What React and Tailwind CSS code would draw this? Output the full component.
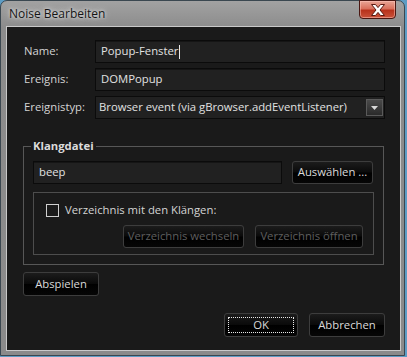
import React from "react";

const btnBase =
  "flex items-center justify-center rounded-[3px] border border-[#3d3d3d] bg-[linear-gradient(180deg,#1c1c1c_0%,#0a0a0a_48%,#000_52%,#060606_100%)] text-[11.3px] leading-none";

function Button({ children, className = "", disabled, focus }) {
  return (
    <div
      className={`${btnBase} ${disabled ? "text-[#5e5e5e]" : "text-[#dadada]"} ${className} relative`}
    >
      {focus && (
        <div className="absolute inset-[3px] border border-dotted border-[#e8e8e8]" />
      )}
      <span className="-mt-px">{children}</span>
    </div>
  );
}

function TextField({ value, caret }) {
  return (
    <div className="flex h-[23px] items-center border border-[#0b0b0b] bg-[#212121] pl-[5px] text-[11.3px] text-[#e2e2e2] shadow-[inset_0_1px_0_#151515]">
      <span>{value}</span>
      {caret && <span className="ml-px h-[14px] w-px bg-[#e8e8e8]" />}
    </div>
  );
}

function Select({ value }) {
  return (
    <div className="flex h-[23px] items-center justify-between border border-[#0b0b0b] bg-[#212121] pl-[3px] pr-px text-[11.3px] text-[#e2e2e2]">
      <span>{value}</span>
      <div className="flex h-[17px] w-[17px] items-center justify-center border border-[#5a5a5a] bg-[linear-gradient(180deg,#4a4a4a,#2a2a2a)]">
        <svg width="7" height="4" viewBox="0 0 7 4">
          <path d="M0 0h7L3.5 4z" fill="#d8d8d8" />
        </svg>
      </div>
    </div>
  );
}

function CloseIcon() {
  return (
    <svg width="16" height="12" viewBox="0 0 16 12">
      <path
        d="M1.5 0.5h4L8 3.6 10.5 0.5h4L10 6l4.5 5.5h-4L8 8.4 5.5 11.5h-4L6 6z"
        fill="#fff"
        stroke="#5a1a12"
        strokeWidth="1"
        strokeLinejoin="round"
      />
    </svg>
  );
}

export default function App() {
  return (
    <div className="h-[357px] w-[407px] overflow-hidden bg-[#5d9cc4] font-['Segoe_UI','Open_Sans',sans-serif]">
      <div className="flex h-[356px] w-[405px] flex-col rounded-t-[7px] border border-[#3a4750] bg-[linear-gradient(180deg,#a2a2a2_0px,#8c8c8c_26px,#8a8a8a_100%)] pb-[4px] pl-[5px] pr-[3px]">
        {/* title bar */}
        <div className="flex h-[25px] items-start justify-between">
          <div className="pl-[3px] pt-[4px] text-[12px] text-[#151515] [text-shadow:0_0_6px_#e6e6e6,0_0_3px_#e0e0e0]">
            Noise Bearbeiten
          </div>
          <div className="-mt-px mr-[5px] flex h-[19px] w-[37px] items-center justify-center rounded-b-[4px] border border-[#4a1712] bg-[linear-gradient(180deg,#e9a596_0%,#d9705c_45%,#b8321c_55%,#c9523a_100%)] shadow-[inset_0_0_0_1px_rgba(255,200,190,0.5)]">
            <CloseIcon />
          </div>
        </div>

        {/* client area */}
        <div className="flex flex-1 flex-col border border-[#c9c9c9] bg-[#1a1a1a] text-[11.3px] text-[#d4d4d4]">
          <div className="mt-[13px] grid grid-cols-[71px_1fr] gap-y-[5px] pl-[17px] pr-[15px]">
            <div className="flex items-center">Name:</div>
            <TextField value="Popup-Fenster" caret />
            <div className="flex items-center">Ereignis:</div>
            <TextField value="DOMPopup" />
            <div className="flex items-center">Ereignistyp:</div>
            <Select value="Browser event (via gBrowser.addEventListener)" />
          </div>

          <fieldset className="mx-[16px] mt-[19px] border border-[#575757] px-[9px] pb-[9px]">
            <legend className="-ml-[2px] px-[2px] text-[11.3px] font-bold leading-[16px] text-[#dcdcdc]">
              Klangdatei
            </legend>
            <div className="mt-[7px] flex gap-[10px]">
              <div className="w-[249px]">
                <TextField value="beep" />
              </div>
              <Button className="h-[23px] w-[81px]">Auswählen ...</Button>
            </div>
            <div className="mt-[8px] border border-[#4d4d4d] pb-[6px] pl-[12px] pr-[10px] pt-[9px]">
              <div className="flex items-center gap-[6px]">
                <div className="h-[13px] w-[13px] border border-[#cfcfcf] bg-[#1a1a1a]" />
                <span>Verzeichnis mit den Klängen:</span>
              </div>
              <div className="mt-[6px] flex justify-end gap-[11px]">
                <Button disabled className="h-[23px] w-[121px]">
                  Verzeichnis wechseln
                </Button>
                <Button disabled className="h-[23px] w-[108px]">
                  Verzeichnis öffnen
                </Button>
              </div>
            </div>
          </fieldset>

          <div className="ml-[16px] mt-[7px]">
            <Button className="h-[24px] w-[76px]">Abspielen</Button>
          </div>

          <div className="mt-auto flex justify-end gap-[11px] pb-[13px] pr-[15px]">
            <Button focus className="h-[24px] w-[74px]">
              OK
            </Button>
            <Button className="h-[24px] w-[76px]">Abbrechen</Button>
          </div>
        </div>
      </div>
    </div>
  );
}
